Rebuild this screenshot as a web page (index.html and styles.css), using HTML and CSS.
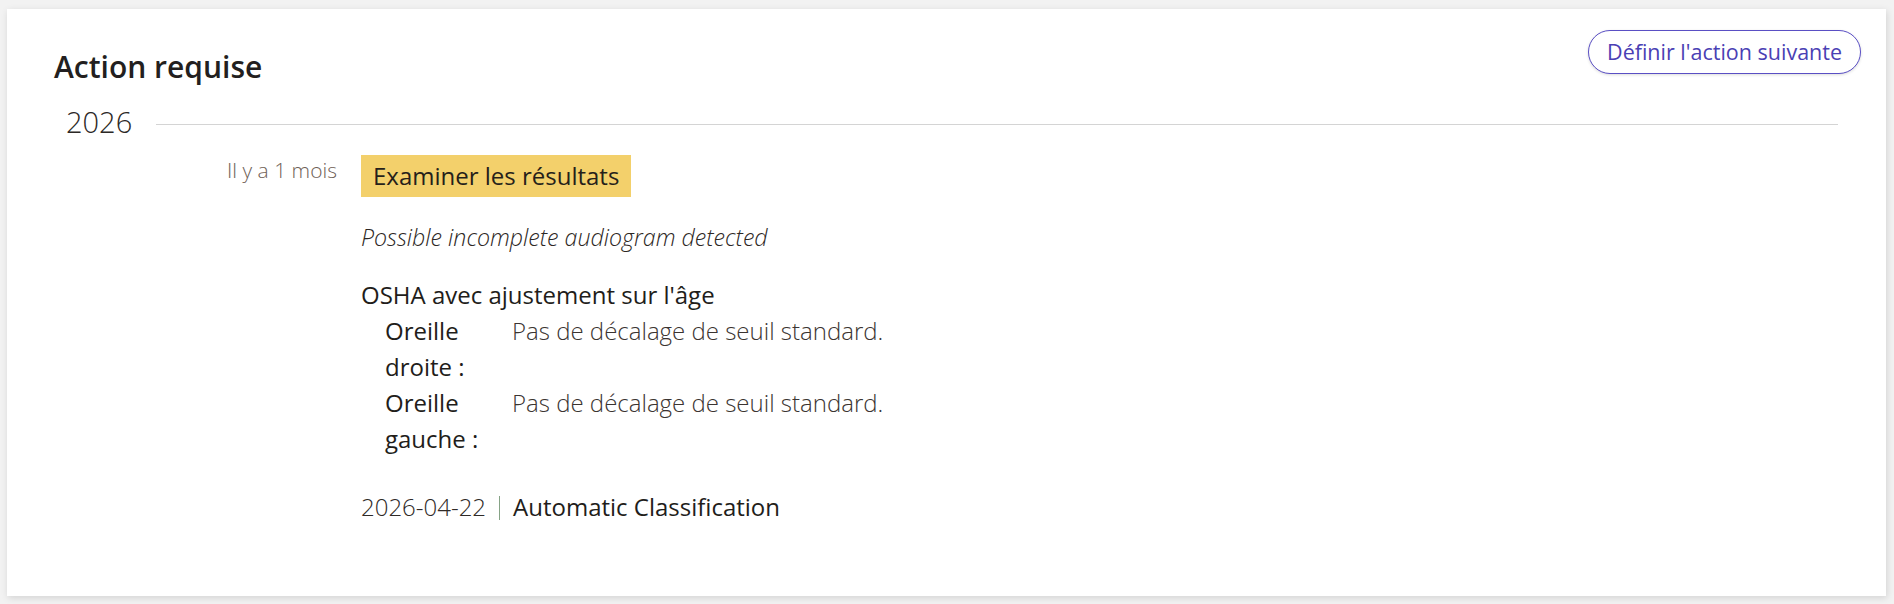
FILE: index.html
```html
<!DOCTYPE html>
<html lang="fr">

    <head>
        <meta charset="UTF-8">
        <meta name="viewport" content="width=device-width, initial-scale=1.0">
        <title>Action requise</title>
        <link rel="stylesheet" href="styles.css">
    </head>

    <body>
        <div class="card">
            <div class="card-header">
                <h2 class="title">Action requise</h2>
                <button class="next-btn" type="button">Définir l'action suivante</button>
            </div>

            <div class="year-row">
                <span class="year">2026</span>
                <span class="year-line"></span>
            </div>

            <div class="entry">
                <div class="entry-time">Il y a 1 mois</div>
                <div class="entry-body">
                    <span class="badge">Examiner les résultats</span>
                    <p class="note">Possible incomplete audiogram detected</p>

                    <div class="result">
                        <div class="result-title">OSHA avec ajustement sur l'âge</div>
                        <div class="ear-row">
                            <span class="ear-label">Oreille droite :</span>
                            <span class="ear-value">Pas de décalage de seuil standard.</span>
                        </div>
                        <div class="ear-row">
                            <span class="ear-label">Oreille gauche :</span>
                            <span class="ear-value">Pas de décalage de seuil standard.</span>
                        </div>
                    </div>

                    <div class="meta">
                        <span class="meta-date">2026-04-22</span>
                        <span class="meta-sep"></span>
                        <span class="meta-source">Automatic Classification</span>
                    </div>
                </div>
            </div>
        </div>
    </body>

</html>
```

FILE: styles.css
```css
* {
    margin: 0;
    padding: 0;
    box-sizing: border-box;
}

body {
    font-family: 'Open Sans', 'Noto Sans', sans-serif;
    background-color: #f2f2f2;
    padding: 9px 8px 9px 7px;
    color: #221d1a;
    font-size: 24px;
    line-height: 36px;
}

.card {
    background: #fff;
    box-shadow: 1px 2px 7px rgba(0, 0, 0, 0.13);
    padding-bottom: 71px;
}

.card-header {
    display: flex;
    justify-content: space-between;
    align-items: flex-start;
    padding: 21px 25px 0 47px;
}

.title {
    font-size: 30px;
    font-weight: 600;
    line-height: 36px;
    margin-top: 19px;
    color: #231f20;
}

.next-btn {
    font-family: inherit;
    font-size: 21.5px;
    line-height: 42px;
    height: 44px;
    padding: 0 18px;
    color: #4a40b4;
    background: #fff;
    border: 1px solid #5a4fc4;
    border-radius: 22px;
    box-shadow: 0 1px 3px rgba(0, 0, 0, 0.14);
    cursor: pointer;
}

.year-row {
    display: flex;
    align-items: center;
    margin: 17px 48px 0 59px;
    height: 40px;
}

.year {
    font-size: 29px;
    font-weight: 300;
    line-height: 40px;
    color: #2c2826;
}

.year-line {
    flex: 1;
    height: 1px;
    background: #d4d4d4;
    margin: 4px 0 0 24px;
}

.entry {
    display: flex;
    gap: 24px;
    margin: 13px 0 0 59px;
}

.entry-time {
    width: 271px;
    text-align: right;
    font-size: 21px;
    font-weight: 300;
    line-height: 30px;
    color: #6f6157;
}

.badge {
    display: inline-block;
    background: #f3d06b;
    padding: 3px 12px;
    color: #261f1a;
}

.note {
    margin-top: 22px;
    font-size: 23.2px;
    font-style: italic;
    font-weight: 300;
    color: #2d2724;
}

.result {
    margin-top: 22px;
}

.ear-row {
    display: flex;
    padding-left: 24px;
}

.ear-label {
    width: 127px;
    padding-right: 17px;
}

.ear-value {
    font-weight: 300;
    color: #3b3431;
}

.meta {
    display: flex;
    align-items: center;
    margin-top: 32px;
}

.meta-date {
    font-weight: 300;
    color: #2f2a27;
}

.meta-sep {
    width: 1px;
    height: 24px;
    background: #86a386;
    margin: 2px 13px 0 13px;
}
```
